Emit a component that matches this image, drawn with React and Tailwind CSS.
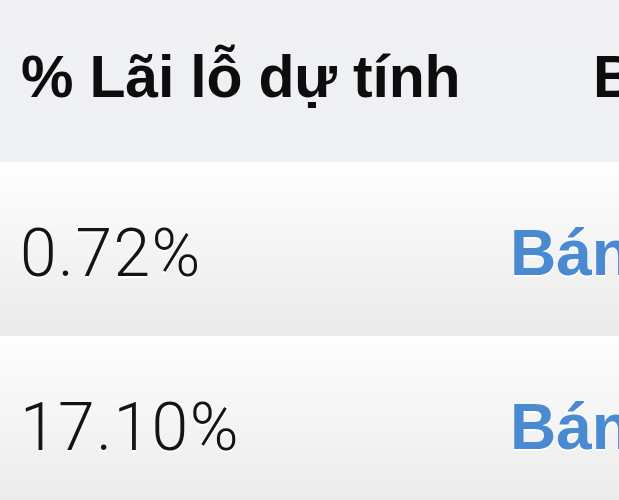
import React from "react";

const rows = [
  { pct: "0.72%", action: "Bán" },
  { pct: "17.10%", action: "Bán" },
];

export default function App() {
  return (
    <div className="w-[619px] h-[500px] overflow-hidden bg-white">
      {/* header */}
      <div className="flex h-[162px] items-center bg-gradient-to-b from-[#f1f1f3] to-[#edf0f4] font-['Liberation_Sans',Arial,sans-serif] font-bold text-[59px] leading-none text-[#0d0d0d] whitespace-nowrap">
        <div className="w-[593px] shrink-0 pl-[21px] pb-[8px] tracking-[-0.2px]">% Lãi lỗ dự tính</div>
        <div className="shrink-0 pb-[8px]">Bán</div>
      </div>

      {/* rows */}
      {rows.map((r, i) => (
        <div
          key={i}
          className="flex h-[174px] shrink-0 items-center bg-gradient-to-b from-[#fefefe] to-[#eaeaea] whitespace-nowrap [text-shadow:0_2px_0_#ffffff]"
        >
          <div className="w-[510px] shrink-0 pl-[20px] pt-[10px] font-['Roboto',sans-serif] font-light text-[66px] leading-none tracking-[1.5px] text-[#141414]">
            {r.pct}
          </div>
          <div className="shrink-0 pt-[8px] font-['Liberation_Sans',Arial,sans-serif] font-bold text-[64px] leading-none text-[#4a8ad0]">
            {r.action}
          </div>
        </div>
      ))}
    </div>
  );
}
